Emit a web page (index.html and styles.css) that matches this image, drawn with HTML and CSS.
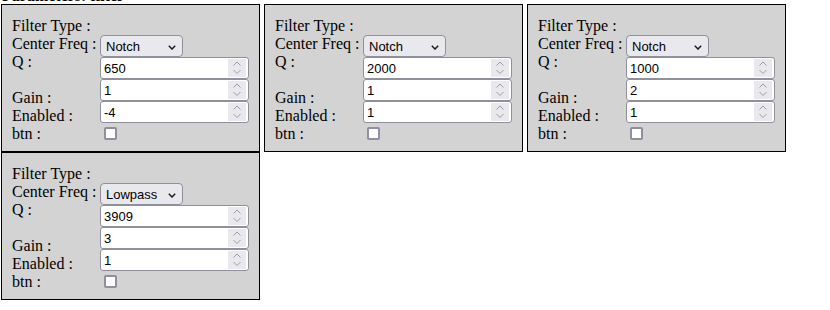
FILE: index.html
```html
<!DOCTYPE html>
<html lang="en">
<head>
    <meta charset="UTF-8">
    <meta name="viewport" content="width=device-width, initial-scale=1.0">
    <title>Filters</title>
    <link rel="stylesheet" href="styles.css">
</head>
<body>
    <div class="page">
        <div class="title">Parameters: filter</div>

        <div class="filters">
            <!-- filter 1 -->
            <div class="filter">
                <div class="labels">Filter Type :<br>Center Freq :<br>Q :<br><br>Gain :<br>Enabled :<br>btn :</div>
                <div class="controls">
                    <div class="select"><span>Notch</span><svg width="8" height="5" viewBox="0 0 8 5"><polyline points="0.8,0.8 4,4 7.2,0.8" fill="none" stroke="#1b1b1b" stroke-width="1.5"/></svg></div>
                    <div class="num"><input type="text" value="650"><span class="spin"><svg width="18" height="18" viewBox="0 0 18 18"><polyline points="5.5,6.5 9,3 12.5,6.5" fill="none" stroke="#9c9ca6"/><polyline points="5.5,11 9,14.5 12.5,11" fill="none" stroke="#9c9ca6"/></svg></span></div>
                    <div class="num"><input type="text" value="1"><span class="spin"><svg width="18" height="18" viewBox="0 0 18 18"><polyline points="5.5,6.5 9,3 12.5,6.5" fill="none" stroke="#9c9ca6"/><polyline points="5.5,11 9,14.5 12.5,11" fill="none" stroke="#9c9ca6"/></svg></span></div>
                    <div class="num"><input type="text" value="-4"><span class="spin"><svg width="18" height="18" viewBox="0 0 18 18"><polyline points="5.5,6.5 9,3 12.5,6.5" fill="none" stroke="#9c9ca6"/><polyline points="5.5,11 9,14.5 12.5,11" fill="none" stroke="#9c9ca6"/></svg></span></div>
                    <input type="checkbox" class="check">
                </div>
            </div>

            <!-- filter 2 -->
            <div class="filter">
                <div class="labels">Filter Type :<br>Center Freq :<br>Q :<br><br>Gain :<br>Enabled :<br>btn :</div>
                <div class="controls">
                    <div class="select"><span>Notch</span><svg width="8" height="5" viewBox="0 0 8 5"><polyline points="0.8,0.8 4,4 7.2,0.8" fill="none" stroke="#1b1b1b" stroke-width="1.5"/></svg></div>
                    <div class="num"><input type="text" value="2000"><span class="spin"><svg width="18" height="18" viewBox="0 0 18 18"><polyline points="5.5,6.5 9,3 12.5,6.5" fill="none" stroke="#9c9ca6"/><polyline points="5.5,11 9,14.5 12.5,11" fill="none" stroke="#9c9ca6"/></svg></span></div>
                    <div class="num"><input type="text" value="1"><span class="spin"><svg width="18" height="18" viewBox="0 0 18 18"><polyline points="5.5,6.5 9,3 12.5,6.5" fill="none" stroke="#9c9ca6"/><polyline points="5.5,11 9,14.5 12.5,11" fill="none" stroke="#9c9ca6"/></svg></span></div>
                    <div class="num"><input type="text" value="1"><span class="spin"><svg width="18" height="18" viewBox="0 0 18 18"><polyline points="5.5,6.5 9,3 12.5,6.5" fill="none" stroke="#9c9ca6"/><polyline points="5.5,11 9,14.5 12.5,11" fill="none" stroke="#9c9ca6"/></svg></span></div>
                    <input type="checkbox" class="check">
                </div>
            </div>

            <!-- filter 3 -->
            <div class="filter">
                <div class="labels">Filter Type :<br>Center Freq :<br>Q :<br><br>Gain :<br>Enabled :<br>btn :</div>
                <div class="controls">
                    <div class="select"><span>Notch</span><svg width="8" height="5" viewBox="0 0 8 5"><polyline points="0.8,0.8 4,4 7.2,0.8" fill="none" stroke="#1b1b1b" stroke-width="1.5"/></svg></div>
                    <div class="num"><input type="text" value="1000"><span class="spin"><svg width="18" height="18" viewBox="0 0 18 18"><polyline points="5.5,6.5 9,3 12.5,6.5" fill="none" stroke="#9c9ca6"/><polyline points="5.5,11 9,14.5 12.5,11" fill="none" stroke="#9c9ca6"/></svg></span></div>
                    <div class="num"><input type="text" value="2"><span class="spin"><svg width="18" height="18" viewBox="0 0 18 18"><polyline points="5.5,6.5 9,3 12.5,6.5" fill="none" stroke="#9c9ca6"/><polyline points="5.5,11 9,14.5 12.5,11" fill="none" stroke="#9c9ca6"/></svg></span></div>
                    <div class="num"><input type="text" value="1"><span class="spin"><svg width="18" height="18" viewBox="0 0 18 18"><polyline points="5.5,6.5 9,3 12.5,6.5" fill="none" stroke="#9c9ca6"/><polyline points="5.5,11 9,14.5 12.5,11" fill="none" stroke="#9c9ca6"/></svg></span></div>
                    <input type="checkbox" class="check">
                </div>
            </div>

            <!-- filter 4 -->
            <div class="filter">
                <div class="labels">Filter Type :<br>Center Freq :<br>Q :<br><br>Gain :<br>Enabled :<br>btn :</div>
                <div class="controls">
                    <div class="select"><span>Lowpass</span><svg width="8" height="5" viewBox="0 0 8 5"><polyline points="0.8,0.8 4,4 7.2,0.8" fill="none" stroke="#1b1b1b" stroke-width="1.5"/></svg></div>
                    <div class="num"><input type="text" value="3909"><span class="spin"><svg width="18" height="18" viewBox="0 0 18 18"><polyline points="5.5,6.5 9,3 12.5,6.5" fill="none" stroke="#9c9ca6"/><polyline points="5.5,11 9,14.5 12.5,11" fill="none" stroke="#9c9ca6"/></svg></span></div>
                    <div class="num"><input type="text" value="3"><span class="spin"><svg width="18" height="18" viewBox="0 0 18 18"><polyline points="5.5,6.5 9,3 12.5,6.5" fill="none" stroke="#9c9ca6"/><polyline points="5.5,11 9,14.5 12.5,11" fill="none" stroke="#9c9ca6"/></svg></span></div>
                    <div class="num"><input type="text" value="1"><span class="spin"><svg width="18" height="18" viewBox="0 0 18 18"><polyline points="5.5,6.5 9,3 12.5,6.5" fill="none" stroke="#9c9ca6"/><polyline points="5.5,11 9,14.5 12.5,11" fill="none" stroke="#9c9ca6"/></svg></span></div>
                    <input type="checkbox" class="check">
                </div>
            </div>
        </div>
    </div>
</body>
</html>
```
FILE: styles.css
```css
body {
    margin: 0;
    font-family: "Liberation Serif", "Times New Roman", serif;
    font-size: 16px;
    color: #000;
    background: #fff;
    overflow: hidden;
}

.page {
    padding: 0 1px;
}

.title {
    font-weight: bold;
    line-height: 18px;
    margin-top: -13px;
    margin-bottom: -1px;
    padding-left: 1px;
    white-space: nowrap;
}

.filters {
    display: flex;
    flex-wrap: wrap;
    column-gap: 4px;
    width: 790px;
}

.filter {
    width: 259px;
    height: 148px;
    box-sizing: border-box;
    border: 1px solid #000;
    background-color: #d3d3d3;
    padding: 10px;
    display: flex;
    gap: 4px;
}

.labels {
    width: 84px;
    padding-top: 2px;
    line-height: 18px;
    white-space: nowrap;
}

.controls {
    flex: 1;
    display: flex;
    flex-direction: column;
    align-items: flex-start;
    padding-top: 20px;
}

.select {
    width: 83px;
    height: 22px;
    box-sizing: border-box;
    border: 1px solid #8f8f9d;
    border-radius: 4px;
    background-color: #e9e9ed;
    display: flex;
    align-items: center;
    justify-content: space-between;
    padding: 1px 6px 0 5px;
    font-family: "Liberation Sans", Arial, sans-serif;
    font-size: 13px;
    color: #000;
}

.select svg {
    margin-top: 1px;
}

.num {
    width: 149px;
    height: 22px;
    box-sizing: border-box;
    border: 1px solid #8f8f9d;
    border-radius: 3px;
    background-color: #fff;
    display: flex;
    align-items: center;
    padding: 1px 2px 1px 3px;
}

.num input {
    flex: 1;
    min-width: 0;
    border: 0;
    outline: 0;
    padding: 0;
    margin: 0;
    background: transparent;
    font-family: "Liberation Sans", Arial, sans-serif;
    font-size: 13px;
    color: #000;
}

.spin {
    width: 18px;
    height: 18px;
    background-color: #e9e9ed;
    display: flex;
}

.check {
    appearance: none;
    margin: 4px 0 0 4px;
    width: 13px;
    height: 13px;
    box-sizing: border-box;
    border: 2px solid #8f8f9d;
    border-radius: 2px;
    background-color: #fff;
}
```
